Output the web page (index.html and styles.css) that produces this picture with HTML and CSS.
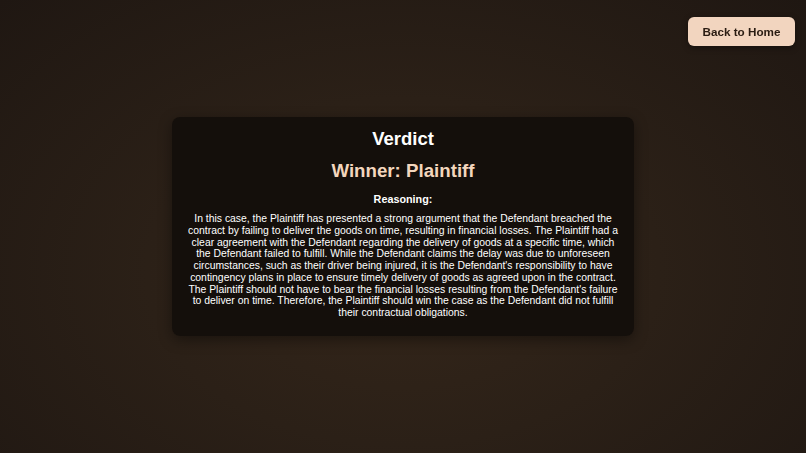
FILE: index.html
```html
<!DOCTYPE html>
<html lang="en">
<head>
<meta charset="utf-8">
<title>Verdict</title>
<link rel="stylesheet" href="styles.css">
</head>
<body>
<a class="home-btn" href="#">Back to Home</a>
<main class="page">
  <section class="card">
    <h1 class="title">Verdict</h1>
    <h2 class="winner">Winner: Plaintiff</h2>
    <h3 class="label">Reasoning:</h3>
    <p class="reason">In this case, the Plaintiff has presented a strong argument that the Defendant breached the contract by failing to deliver the goods on time, resulting in financial losses. The Plaintiff had a clear agreement with the Defendant regarding the delivery of goods at a specific time, which the Defendant failed to fulfill. While the Defendant claims the delay was due to unforeseen circumstances, such as their driver being injured, it is the Defendant's responsibility to have contingency plans in place to ensure timely delivery of goods as agreed upon in the contract. The Plaintiff should not have to bear the financial losses resulting from the Defendant's failure to deliver on time. Therefore, the Plaintiff should win the case as the Defendant did not fulfill their contractual obligations.</p>
  </section>
</main>
</body>
</html>
```

FILE: styles.css
```css
html, body {
  margin: 0;
  padding: 0;
  height: 100%;
}

body {
  font-family: "Liberation Sans", Arial, sans-serif;
  color: #ffffff;
  background: radial-gradient(ellipse at 50% 60%, #34261a 0%, #2b2017 45%, #1f1712 100%);
  overflow: hidden;
}

.page {
  height: 100%;
  display: flex;
  align-items: center;
  justify-content: center;
}

.home-btn {
  position: fixed;
  top: 17px;
  right: 11px;
  width: 107px;
  height: 29px;
  display: flex;
  align-items: center;
  justify-content: center;
  background: #f2d5bf;
  color: #2a1c12;
  font-weight: bold;
  font-size: 11.7px;
  text-decoration: none;
  border-radius: 6px;
  box-sizing: border-box;
  box-shadow: 0 2px 6px rgba(0, 0, 0, 0.35);
}

.card {
  width: 462px;
  box-sizing: border-box;
  padding: 10px 15px 17px;
  background: rgba(18, 13, 10, 0.9);
  border-radius: 8px;
  box-shadow: 0 4px 14px rgba(0, 0, 0, 0.4);
  text-align: center;
}

.title {
  margin: 0;
  font-size: 18.5px;
  line-height: 23px;
  font-weight: bold;
  color: #ffffff;
}

.winner {
  margin: 9px 0 0;
  font-size: 18.7px;
  line-height: 23px;
  font-weight: bold;
  color: #f3d6bd;
}

.label {
  margin: 11px 0 0;
  font-size: 10.8px;
  line-height: 13px;
  font-weight: bold;
  color: #ffffff;
}

.reason {
  margin: 7px 0 0;
  font-size: 10.4px;
  line-height: 11.75px;
  color: #ffffff;
}
```
